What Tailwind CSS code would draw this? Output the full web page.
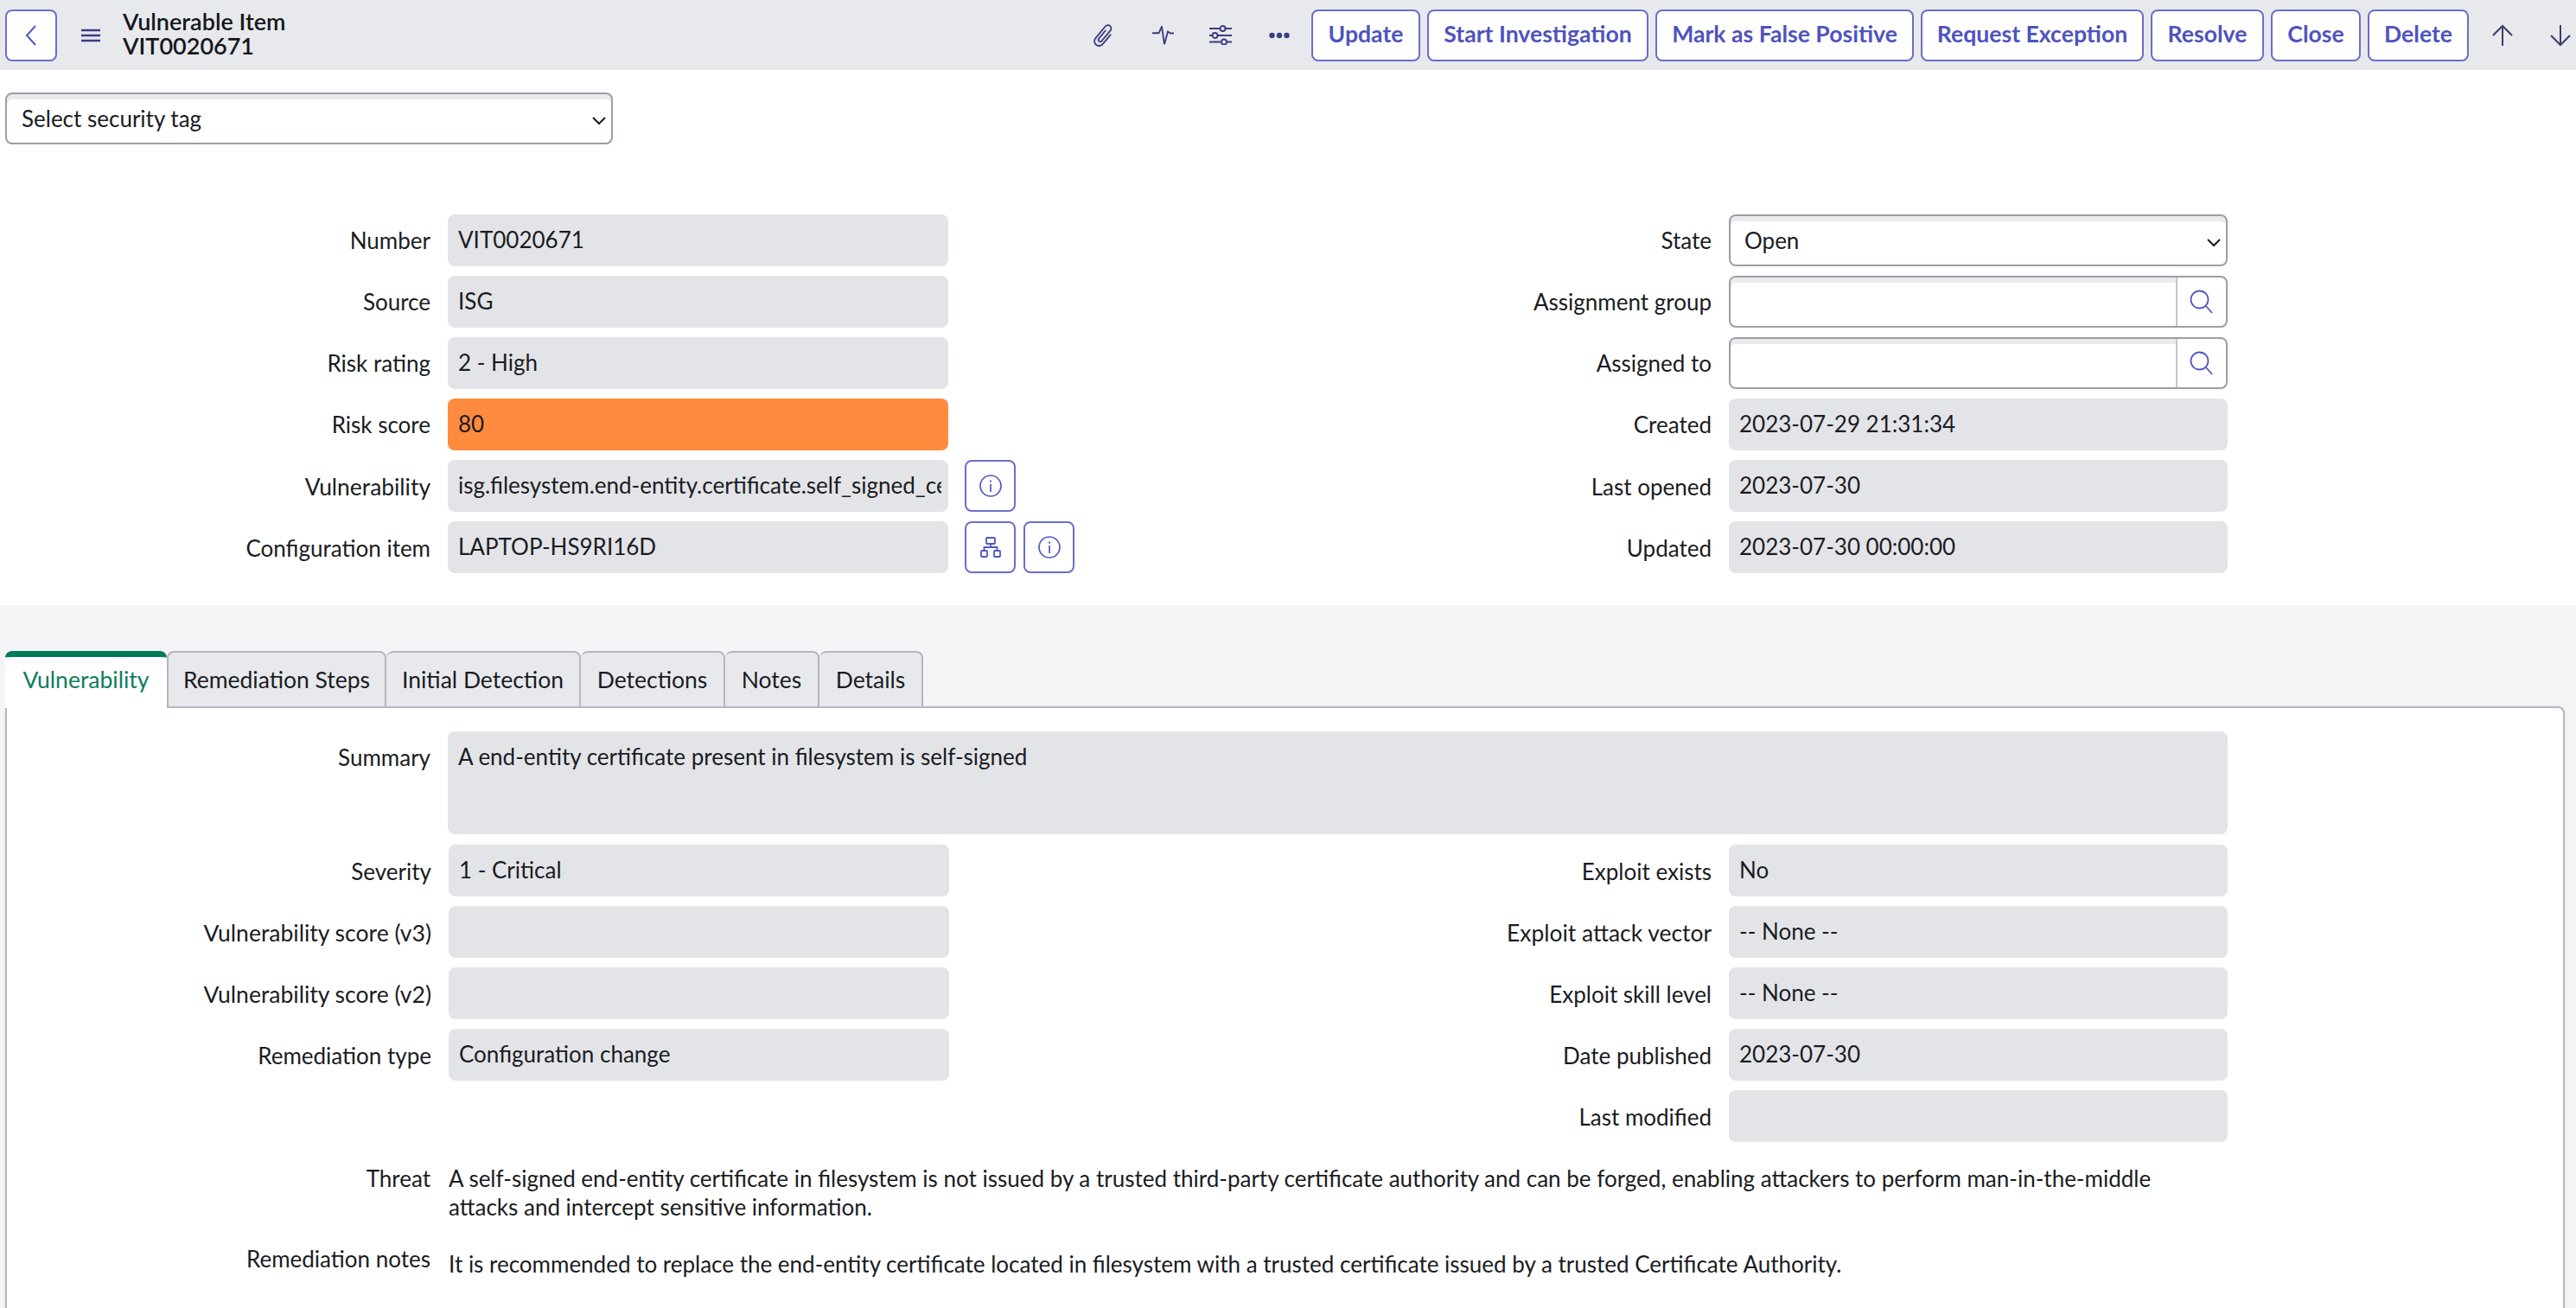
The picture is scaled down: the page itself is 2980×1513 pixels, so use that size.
<!DOCTYPE html>
<html lang="en">
<head>
<meta charset="utf-8">
<title>Vulnerable Item VIT0020671</title>
<script src="https://cdn.jsdelivr.net/npm/@tailwindcss/browser@4"></script>
</head>
<body class="m-0 h-screen overflow-hidden bg-white font-['Lato','Noto_Sans',sans-serif] text-[26px] leading-[33px] text-[#1a1c22]">

<!-- Header -->
<header class="flex h-[81px] items-center bg-[#e8e9ed] pl-[6px] pr-[6px]">
  <button class="flex h-[60px] w-[60px] items-center justify-center rounded-[8px] border-2 border-[#6a6ec9] bg-white">
    <svg width="16" height="26" viewBox="0 0 16 26" fill="none" stroke="#5357c0" stroke-width="2"><path d="M13 2 3 13l10 11"/></svg>
  </button>
  <svg class="ml-[28px]" width="22" height="16" viewBox="0 0 22 16" fill="none" stroke="#3c3c86" stroke-width="2.4"><path d="M0 2h22M0 8h22M0 14h22"/></svg>
  <div class="ml-[26px] pb-[4px] text-[27px] font-semibold leading-[28px] text-[#15171c]">
    <div>Vulnerable Item</div>
    <div>VIT0020671</div>
  </div>
  <div class="ml-auto flex items-center">
    <svg class="mr-[43px]" width="26" height="28" viewBox="0 0 24 26" fill="none" stroke="#3d3d80" stroke-width="1.7" stroke-linecap="round"><path transform="rotate(40 12 13)" d="M17 8V21a5 5 0 0 1-10 0V4.500a3.500 3.500 0 0 1 7 0V19a2 2 0 0 1-4 0V8"/></svg>
    <svg class="mr-[41px]" width="25" height="22" viewBox="0 0 25 22" fill="none" stroke="#3d3d80" stroke-width="1.900"><path d="M0 8.300h7.500L11 .8l3 20.400 4-14.700 3 2h4"/></svg>
    <svg class="mr-[43px]" width="26" height="23" viewBox="0 0 26 23" fill="none" stroke="#3d3d80" stroke-width="1.900"><path d="M0 4h12M19 4h7M0 12h3M10 12h16M0 19.500h13M20 19.500h6"/><circle cx="15.500" cy="4" r="3"/><circle cx="6.500" cy="12" r="3"/><circle cx="17" cy="19.500" r="3"/></svg>
    <svg class="mr-[25px]" width="24" height="8" viewBox="0 0 24 8" fill="#3d3d80"><circle cx="3.500" cy="4" r="3.200"/><circle cx="12" cy="4" r="3.200"/><circle cx="20.500" cy="4" r="3.200"/></svg>
    <div class="flex gap-[8px] text-[26.6px] font-bold text-[#4f53bd]">
      <button class="h-[60px] w-[126px] rounded-[8px] border-2 border-[#6a6ec9] bg-white pb-[3px]">Update</button>
      <button class="h-[60px] w-[256px] rounded-[8px] border-2 border-[#6a6ec9] bg-white pb-[3px]">Start Investigation</button>
      <button class="h-[60px] w-[299px] rounded-[8px] border-2 border-[#6a6ec9] bg-white pb-[3px]">Mark as False Positive</button>
      <button class="h-[60px] w-[258px] rounded-[8px] border-2 border-[#6a6ec9] bg-white pb-[3px]">Request Exception</button>
      <button class="h-[60px] w-[131px] rounded-[8px] border-2 border-[#6a6ec9] bg-white pb-[3px]">Resolve</button>
      <button class="h-[60px] w-[104px] rounded-[8px] border-2 border-[#6a6ec9] bg-white pb-[3px]">Close</button>
      <button class="h-[60px] w-[117px] rounded-[8px] border-2 border-[#6a6ec9] bg-white pb-[3px]">Delete</button>
    </div>
    <svg class="ml-[27px]" width="24" height="26" viewBox="0 0 24 26" fill="none" stroke="#3d3d6b" stroke-width="2"><path d="M12 25V2M1 13 12 2l11 11"/></svg>
    <svg class="ml-[43px]" width="24" height="26" viewBox="0 0 24 26" fill="none" stroke="#3d3d6b" stroke-width="2"><path d="M12 1v23M1 13l11 11 11-11"/></svg>
  </div>
</header>

<!-- Top form -->
<section class="h-[619px] bg-white">
  <div class="px-[6px] pt-[26px]">
    <div class="relative h-[60px] w-[703px] rounded-[8px] border-2 border-[#9a9ea6] bg-white pl-[17px] pt-[4px] shadow-[inset_0_6px_0_#ebebed]">
      <div class="leading-[49px]">Select security tag</div>
      <svg class="absolute right-[6px] top-[26px]" width="16" height="10" viewBox="0 0 16 10" fill="none" stroke="#1a1c22" stroke-width="2"><path d="m1 1 7 7 7-7"/></svg>
    </div>
  </div>

  <div class="mt-[81px] flex">
    <!-- left column -->
    <div class="flex w-[1300px] flex-col gap-[11px]">
      <div class="flex h-[60px] items-center"><div class="w-[498px] text-right">Number</div><div class="ml-[20px] flex h-[60px] w-[579px] items-center rounded-[8px] bg-[#e3e4e8] px-[12px] pb-[2px]">VIT0020671</div></div>
      <div class="flex h-[60px] items-center"><div class="w-[498px] text-right">Source</div><div class="ml-[20px] flex h-[60px] w-[579px] items-center rounded-[8px] bg-[#e3e4e8] px-[12px] pb-[2px]">ISG</div></div>
      <div class="flex h-[60px] items-center"><div class="w-[498px] text-right">Risk rating</div><div class="ml-[20px] flex h-[60px] w-[579px] items-center rounded-[8px] bg-[#e3e4e8] px-[12px] pb-[2px]">2 - High</div></div>
      <div class="flex h-[60px] items-center"><div class="w-[498px] text-right">Risk score</div><div class="ml-[20px] flex h-[60px] w-[579px] items-center rounded-[8px] bg-[#ff8c3e] px-[12px] pb-[2px]">80</div></div>
      <div class="flex h-[60px] items-center">
        <div class="w-[498px] pt-[2px] text-right text-[26.4px]">Vulnerability</div>
        <div class="ml-[20px] flex h-[60px] w-[579px] items-center rounded-[8px] bg-[#e3e4e8] pl-[12px] pr-[8px] pb-[2px]"><div class="overflow-hidden whitespace-nowrap">isg.filesystem.end-entity.certificate.self_signed_cert</div></div>
        <button class="ml-[19px] flex h-[60px] w-[59px] items-center justify-center rounded-[8px] border-2 border-[#6a6ec9] bg-white">
          <svg width="26" height="26" viewBox="0 0 26 26" fill="none" stroke="#5357c0" stroke-width="1.700"><circle cx="13" cy="13" r="12"/><path d="M13 11v9M13 6.500v2.200"/></svg>
        </button>
      </div>
      <div class="flex h-[60px] items-center">
        <div class="w-[498px] pt-[2px] text-right">Configuration item</div>
        <div class="ml-[20px] flex h-[60px] w-[579px] items-center rounded-[8px] bg-[#e3e4e8] px-[12px] pb-[2px]">LAPTOP-HS9RI16D</div>
        <button class="ml-[19px] flex h-[60px] w-[59px] items-center justify-center rounded-[8px] border-2 border-[#6a6ec9] bg-white">
          <svg width="24" height="24" viewBox="0 0 24 24" fill="none" stroke="#5357c0" stroke-width="1.800"><rect x="7" y="1" width="10" height="7" rx="1"/><rect x="1" y="16" width="7" height="7" rx="1"/><rect x="16" y="16" width="7" height="7" rx="1"/><path d="M12 8v4M4.500 16v-4h15v4"/></svg>
        </button>
        <button class="ml-[9px] flex h-[60px] w-[59px] items-center justify-center rounded-[8px] border-2 border-[#6a6ec9] bg-white">
          <svg width="26" height="26" viewBox="0 0 26 26" fill="none" stroke="#5357c0" stroke-width="1.700"><circle cx="13" cy="13" r="12"/><path d="M13 11v9M13 6.500v2.200"/></svg>
        </button>
      </div>
    </div>
    <!-- right column -->
    <div class="flex w-[1277px] flex-col gap-[11px]">
      <div class="flex h-[60px] items-center">
        <div class="w-[680px] text-right">State</div>
        <div class="relative ml-[20px] h-[60px] w-[577px] rounded-[8px] border-2 border-[#9a9ea6] bg-white pl-[16px] pt-[4px] shadow-[inset_0_6px_0_#ebebed]">
          <div class="leading-[49px]">Open</div>
          <svg class="absolute right-[6px] top-[26px]" width="16" height="10" viewBox="0 0 16 10" fill="none" stroke="#1a1c22" stroke-width="2"><path d="m1 1 7 7 7-7"/></svg>
        </div>
      </div>
      <div class="flex h-[60px] items-center">
        <div class="w-[680px] text-right">Assignment group</div>
        <div class="ml-[20px] flex h-[60px] w-[577px] rounded-[8px] border-2 border-[#9a9ea6] bg-white">
          <div class="flex-1 rounded-l-[6px] shadow-[inset_0_6px_0_#ebebed]"></div>
          <div class="flex w-[58px] items-center justify-center border-l-2 border-[#c4c6cb]">
            <svg width="30" height="28" viewBox="0 0 30 28" fill="none" stroke="#5357c0" stroke-width="1.800"><circle cx="12.500" cy="11.500" r="10"/><path d="m20 19 7 8"/></svg>
          </div>
        </div>
      </div>
      <div class="flex h-[60px] items-center">
        <div class="w-[680px] text-right">Assigned to</div>
        <div class="ml-[20px] flex h-[60px] w-[577px] rounded-[8px] border-2 border-[#9a9ea6] bg-white">
          <div class="flex-1 rounded-l-[6px] shadow-[inset_0_6px_0_#ebebed]"></div>
          <div class="flex w-[58px] items-center justify-center border-l-2 border-[#c4c6cb]">
            <svg width="30" height="28" viewBox="0 0 30 28" fill="none" stroke="#5357c0" stroke-width="1.800"><circle cx="12.500" cy="11.500" r="10"/><path d="m20 19 7 8"/></svg>
          </div>
        </div>
      </div>
      <div class="flex h-[60px] items-center"><div class="w-[680px] text-right">Created</div><div class="ml-[20px] flex h-[60px] w-[577px] items-center rounded-[8px] bg-[#e3e4e8] px-[12px] pb-[2px]">2023-07-29 21:31:34</div></div>
      <div class="flex h-[60px] items-center"><div class="w-[680px] pt-[2px] text-right">Last opened</div><div class="ml-[20px] flex h-[60px] w-[577px] items-center rounded-[8px] bg-[#e3e4e8] px-[12px] pb-[2px]">2023-07-30</div></div>
      <div class="flex h-[60px] items-center"><div class="w-[680px] pt-[2px] text-right">Updated</div><div class="ml-[20px] flex h-[60px] w-[577px] items-center rounded-[8px] bg-[#e3e4e8] px-[12px] pb-[2px]">2023-07-30 00:00:00</div></div>
    </div>
  </div>
</section>

<!-- Tabs section -->
<section class="h-[813px] bg-[#f5f5f8] pl-[6px] pr-[13px] pt-[53px]">
  <div class="relative z-10 flex h-[66px] items-stretch text-[26.5px]">
    <div class="flex w-[187px] justify-center rounded-t-[8px] border-t-[7px] border-[#007a5a] bg-white pt-[10px] text-[#0c7d5f]">Vulnerability</div>
    <div class="flex w-[254px] justify-center rounded-t-[8px] border-2 border-[#b4b7bf] bg-[#e8e9ed] pt-[15px]">Remediation Steps</div>
    <div class="flex w-[225px] justify-center rounded-t-[8px] border-2 border-l-0 border-[#b4b7bf] bg-[#e8e9ed] pt-[15px]">Initial Detection</div>
    <div class="flex w-[167px] justify-center rounded-t-[8px] border-2 border-l-0 border-[#b4b7bf] bg-[#e8e9ed] pt-[15px]">Detections</div>
    <div class="flex w-[109px] justify-center rounded-t-[8px] border-2 border-l-0 border-[#b4b7bf] bg-[#e8e9ed] pt-[15px]">Notes</div>
    <div class="flex w-[120px] justify-center rounded-t-[8px] border-2 border-l-0 border-[#b4b7bf] bg-[#e8e9ed] pt-[15px]">Details</div>
  </div>
  <div class="-mt-[2px] h-[720px] rounded-tr-[8px] border-x-2 border-t-2 border-[#b4b7bf] bg-white pt-[27px] shadow-[0_0_6px_rgba(0,0,0,0.06)]">
    <div class="flex">
      <div class="w-[510px] pr-[20px] pt-[14px] text-right">Summary</div>
      <div class="h-[119px] w-[2059px] rounded-[8px] bg-[#e3e4e8] px-[12px] pt-[13px]">A end-entity certificate present in filesystem is self-signed</div>
    </div>
    <div class="mt-[12px] flex">
      <div class="flex w-[1292px] flex-col gap-[11px]">
        <div class="flex h-[60px] items-center"><div class="w-[491px] pt-[2px] text-right">Severity</div><div class="ml-[20px] flex h-[60px] w-[579px] items-center rounded-[8px] bg-[#e3e4e8] px-[12px] pb-[2px]">1 - Critical</div></div>
        <div class="flex h-[60px] items-center"><div class="w-[491px] pt-[2px] text-right text-[26.5px]">Vulnerability score (v3)</div><div class="ml-[20px] h-[60px] w-[579px] rounded-[8px] bg-[#e3e4e8]"></div></div>
        <div class="flex h-[60px] items-center"><div class="w-[491px] pt-[2px] text-right text-[26.5px]">Vulnerability score (v2)</div><div class="ml-[20px] h-[60px] w-[579px] rounded-[8px] bg-[#e3e4e8]"></div></div>
        <div class="flex h-[60px] items-center"><div class="w-[491px] pt-[2px] text-right">Remediation type</div><div class="ml-[20px] flex h-[60px] w-[579px] items-center rounded-[8px] bg-[#e3e4e8] px-[12px] pb-[2px]">Configuration change</div></div>
      </div>
      <div class="flex w-[1277px] flex-col gap-[11px]">
        <div class="flex h-[60px] items-center"><div class="w-[680px] pt-[2px] text-right">Exploit exists</div><div class="ml-[20px] flex h-[60px] w-[577px] items-center rounded-[8px] bg-[#e3e4e8] px-[12px] pb-[2px]">No</div></div>
        <div class="flex h-[60px] items-center"><div class="w-[680px] pt-[2px] text-right text-[26.4px]">Exploit attack vector</div><div class="ml-[20px] flex h-[60px] w-[577px] items-center rounded-[8px] bg-[#e3e4e8] px-[12px] pb-[2px]">-- None --</div></div>
        <div class="flex h-[60px] items-center"><div class="w-[680px] pt-[2px] text-right">Exploit skill level</div><div class="ml-[20px] flex h-[60px] w-[577px] items-center rounded-[8px] bg-[#e3e4e8] px-[12px] pb-[2px]">-- None --</div></div>
        <div class="flex h-[60px] items-center"><div class="w-[680px] pt-[2px] text-right">Date published</div><div class="ml-[20px] flex h-[60px] w-[577px] items-center rounded-[8px] bg-[#e3e4e8] px-[12px] pb-[2px]">2023-07-30</div></div>
        <div class="flex h-[60px] items-center"><div class="w-[680px] pt-[2px] text-right">Last modified</div><div class="ml-[20px] h-[60px] w-[577px] rounded-[8px] bg-[#e3e4e8]"></div></div>
      </div>
    </div>
    <div class="-mt-[1px] flex pt-[27px]">
      <div class="w-[511px] pr-[21px] text-right">Threat</div>
      <div class="w-[1990px]">A self-signed end-entity certificate in filesystem is not issued by a trusted third-party certificate authority and can be forged, enabling attackers to perform man-in-the-middle attacks and intercept sensitive information.</div>
    </div>
    <div class="mt-[27px] flex">
      <div class="w-[511px] pr-[21px] text-right">Remediation notes</div>
      <div class="w-[2058px] pt-[6px]">It is recommended to replace the end-entity certificate located in filesystem with a trusted certificate issued by a trusted Certificate Authority.</div>
    </div>
  </div>
</section>
</body>
</html>
